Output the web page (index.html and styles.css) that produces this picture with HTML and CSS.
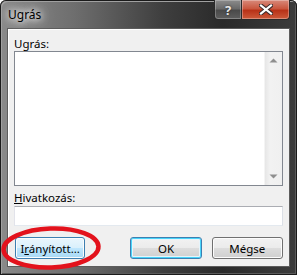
FILE: index.html
```html
<!DOCTYPE html>
<html>
<head>
<meta charset="utf-8">
<link rel="stylesheet" href="styles.css">
</head>
<body>
    <div class="window">
        <div class="titlebar">
            <span class="title">Ugrás</span>
            <div class="caption">
                <div class="help">?</div>
                <div class="close">
                    <svg width="14" height="11" viewBox="0 0 14 11">
                        <path d="M2 1.5 L12 9.5 M12 1.5 L2 9.5" stroke="#3a2a2a" stroke-width="4.2" stroke-linecap="square"/>
                        <path d="M2 1.5 L12 9.5 M12 1.5 L2 9.5" stroke="#fff" stroke-width="2.2" stroke-linecap="square"/>
                    </svg>
                </div>
            </div>
        </div>
        <div class="client">
            <div class="label">Ugrás:</div>
            <div class="listbox">
                <div class="list"></div>
                <div class="scrollbar">
                    <div class="arrow"><svg width="9" height="5" viewBox="0 0 9 5"><path d="M0.5 4.5 L4.5 0.5 L8.5 4.5 Z" fill="#8f8f8f"/></svg></div>
                    <div class="arrow"><svg width="9" height="5" viewBox="0 0 9 5"><path d="M0.5 0.5 L4.5 4.5 L8.5 0.5 Z" fill="#8f8f8f"/></svg></div>
                </div>
            </div>
            <div class="label gap"><u>H</u>ivatkozás:</div>
            <div class="textbox"></div>
            <div class="buttons">
                <button class="btn hover">I<u>r</u>ányított...</button>
                <span class="spacer"></span>
                <button class="btn default">OK</button>
                <button class="btn">Mégse</button>
            </div>
        </div>
        <svg class="mark" width="104" height="48" viewBox="0 0 104 48">
            <ellipse cx="51" cy="23" rx="47.5" ry="19.5" fill="none" stroke="#e3121c" stroke-width="4.5" transform="rotate(-2 51 23)"/>
        </svg>
    </div>
</body>
</html>
```
FILE: styles.css
```css
body {
    margin: 0;
    font-family: "Noto Sans", "Open Sans", sans-serif;
    font-size: 11.5px;
}

.window {
    position: relative;
    width: 297px;
    height: 275px;
    box-sizing: border-box;
    padding: 0 7px 8px 7px;
    border-radius: 6px 6px 0 0;
    background: linear-gradient(to right, #8a8a8a 0%, #6e6e6e 25%, #3e3e3e 55%, #2a2a2a 75%, #3c3c3c 100%);
    box-shadow: inset 0 0 0 1px #1a1a1a, inset 2px 2px 0 #a0a0a0, inset -2px -2px 0 #5a5a5a;
}

.titlebar {
    display: flex;
    justify-content: space-between;
    height: 28px;
}

.title {
    margin-top: 7px;
    margin-left: 1px;
    color: #000;
    font-size: 12px;
    line-height: 15px;
    text-shadow: 0 0 6px #fff, 0 0 10px #fff, 0 0 16px #fff;
}

.caption {
    display: flex;
    height: 20px;
}

.help, .close {
    display: flex;
    align-items: center;
    justify-content: center;
    height: 20px;
    box-sizing: border-box;
    border: 1px solid #2a2a2a;
    border-top: none;
}

.help {
    width: 28px;
    border-radius: 0 0 0 4px;
    background: linear-gradient(#8c8c8c, #6a6a6a 45%, #4a4a4a 55%, #5e5e5e);
    box-shadow: inset 0 0 0 1px rgba(255,255,255,0.25);
    color: #e8e8e8;
    font-weight: bold;
    font-size: 13px;
    text-shadow: 0 0 2px #222;
}

.close {
    width: 48px;
    border-left: none;
    border-radius: 0 0 4px 0;
    background: linear-gradient(#d88a7b, #c9573f 45%, #b83218 55%, #cd5a3a);
    box-shadow: inset 0 0 0 1px rgba(255,255,255,0.3);
}

.client {
    height: 239px;
    box-sizing: border-box;
    padding: 7px 6px 7px 6px;
    background: #f0f0f0;
    border: 1px solid #5c5c5c;
    box-shadow: inset 1px 1px 0 #fff;
}

.label {
    height: 15px;
    line-height: 15px;
    color: #000;
}

.label.gap {
    margin-top: 4px;
}

.listbox {
    display: flex;
    height: 135px;
    box-sizing: border-box;
    border: 1px solid #828790;
    background: #fff;
}

.list {
    flex: 1;
}

.scrollbar {
    width: 17px;
    display: flex;
    flex-direction: column;
    justify-content: space-between;
    background: linear-gradient(to right, #e6e6e6, #f2f2f2 30%, #f0f0f0);
    border-left: 1px solid #f4f4f4;
}

.arrow {
    height: 17px;
    display: flex;
    align-items: center;
    justify-content: center;
}

.textbox {
    height: 20px;
    margin-top: 1px;
    box-sizing: border-box;
    border: 1px solid #abadb3;
    border-color: #abadb3 #dbdfe6 #e3e9ef #e2e3ea;
    background: #fff;
}

.buttons {
    display: flex;
    gap: 10px;
    margin-top: 11px;
}

.spacer {
    width: 26px;
}

.btn {
    width: 74px;
    height: 22px;
    padding: 0;
    font-family: "Noto Sans", "Open Sans", sans-serif;
    font-size: 11.5px;
    color: #000;
    border: 1px solid #707070;
    border-radius: 3px;
    background: linear-gradient(#f2f2f2 0%, #ebebeb 50%, #dddddd 51%, #cfcfcf 100%);
    box-shadow: inset 0 0 0 1px #fcfcfc;
}

.btn.hover {
    width: 73px;
    margin-left: 1px;
    border-color: #3c7fb1;
    background: linear-gradient(#eaf6fd 0%, #d9f0fc 50%, #bee6fd 51%, #a7d9f5 100%);
}

.btn.default {
    border-color: #3c7fb1;
    box-shadow: inset 0 0 0 1px #48d4fa, inset 0 0 0 2px #e6f4fb;
}

.mark {
    position: absolute;
    left: 0;
    top: 225px;
}
```
